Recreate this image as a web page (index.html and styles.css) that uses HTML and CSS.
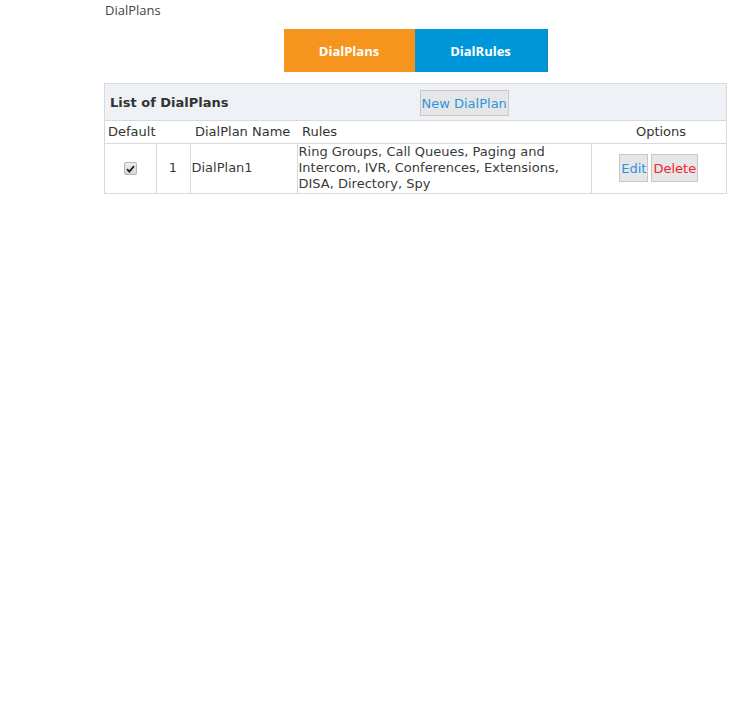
FILE: index.html
```html
<!DOCTYPE html>
<html>
<head>
  <meta charset="utf-8">
  <title>DialPlans</title>
  <link rel="stylesheet" href="styles.css">
</head>
<body>
  <div class="page">
    <div class="crumb">DialPlans</div>

    <!-- tabs -->
    <div class="tabs">
      <a class="tab tab-plans">DialPlans</a>
      <a class="tab tab-rules">DialRules</a>
    </div>

    <div class="panel">
      <div class="panel-head">
        <div class="panel-title">List of DialPlans</div>
        <div class="panel-actions">
          <button class="btn btn-blue">New DialPlan</button>
        </div>
      </div>
      <table class="grid">
        <colgroup>
          <col style="width:51px">
          <col style="width:34px">
          <col style="width:107px">
          <col style="width:294px">
          <col style="width:135px">
        </colgroup>
        <thead>
          <tr>
            <th class="left">Default</th>
            <th></th>
            <th class="left name-head">DialPlan Name</th>
            <th class="left rules-head">Rules</th>
            <th class="center opt-head">Options</th>
          </tr>
        </thead>
        <tbody>
          <tr>
            <td class="center">
              <span class="check" title="default">
                <svg width="9" height="8" viewBox="0 0 9 8"><path d="M1 4.2 L3.4 6.6 L8 1.2" fill="none" stroke="#222" stroke-width="1.8"/></svg>
              </span>
            </td>
            <td class="center">1</td>
            <td>DialPlan1</td>
            <td>Ring Groups, Call Queues, Paging and Intercom, IVR, Conferences, Extensions, DISA, Directory, Spy</td>
            <td class="center">
              <button class="btn btn-small btn-blue">Edit</button><button class="btn btn-small btn-red">Delete</button>
            </td>
          </tr>
        </tbody>
      </table>
    </div>
  </div>
</body>
</html>
```

FILE: styles.css
```css
* {
  box-sizing: border-box;
}

body {
  margin: 0;
  background: #fff;
  font-family: "DejaVu Sans", Verdana, sans-serif;
  font-size: 13px;
  color: #3a3a3a;
}

.page {
  width: 623px;
  margin-left: 104px;
  padding-top: 1px;
}

.crumb {
  font-family: "Open Sans", sans-serif;
  font-size: 13px;
  color: #444;
  height: 28px;
  padding-left: 1px;
}

/* tabs */
.tabs {
  display: flex;
  justify-content: center;
  margin-bottom: 11px;
}

.tab {
  display: flex;
  align-items: center;
  justify-content: center;
  height: 43px;
  font-family: "Open Sans", sans-serif;
  font-weight: bold;
  font-size: 13px;
  color: #fff;
}

.tab-plans {
  background: #f7941d;
  width: 131px;
}

.tab-rules {
  background: #0097da;
  width: 133px;
  border-right: 1px solid #1a7fb5;
}

/* panel */
.panel {
  border: 1px solid #d9d9d9;
}

.panel-head {
  display: flex;
  height: 37px;
  background: #eef2f6;
  border-bottom: 1px solid #d9d9d9;
}

.panel-title {
  width: 50%;
  display: flex;
  align-items: center;
  padding-left: 5px;
  font-weight: bold;
  color: #333;
}

.panel-actions {
  width: 50%;
  display: flex;
  align-items: center;
  padding-left: 4px;
}

.btn {
  font-family: "DejaVu Sans", Verdana, sans-serif;
  font-size: 13px;
  background: #e6e6e6;
  border: 1px solid #c8c8c8;
  padding: 0 1px;
  height: 26px;
  margin: 0;
  white-space: nowrap;
  cursor: pointer;
}

.btn-blue {
  color: #2b95dd;
}

.btn-red {
  color: #f0242e;
  margin-left: 3px;
}

.btn-small {
  height: 28px;
}

.panel-actions .btn {
  padding: 0 1px;
  margin-top: 2px;
}

/* table */
.grid {
  width: 100%;
  border-collapse: collapse;
  table-layout: fixed;
}

.grid th {
  font-weight: normal;
  height: 22px;
  padding: 0 3px;
  border-bottom: 1px solid #d9d9d9;
  color: #333;
}

.grid th.name-head {
  padding-left: 5px;
}

.grid th.rules-head {
  padding-left: 5px;
}

.grid th.opt-head {
  padding-left: 8px;
}

.grid td {
  height: 50px;
  padding: 0 1px;
  line-height: 16px;
  border-left: 1px solid #d9d9d9;
  vertical-align: middle;
}

.grid td:first-child {
  border-left: none;
}

.left {
  text-align: left;
}

.center {
  text-align: center;
}

.check {
  display: inline-flex;
  align-items: center;
  justify-content: center;
  width: 13px;
  height: 13px;
  border: 1px solid #b5b5b5;
  border-radius: 2px;
  background: linear-gradient(#eeeeee, #d6d6d6);
  vertical-align: middle;
}
```
